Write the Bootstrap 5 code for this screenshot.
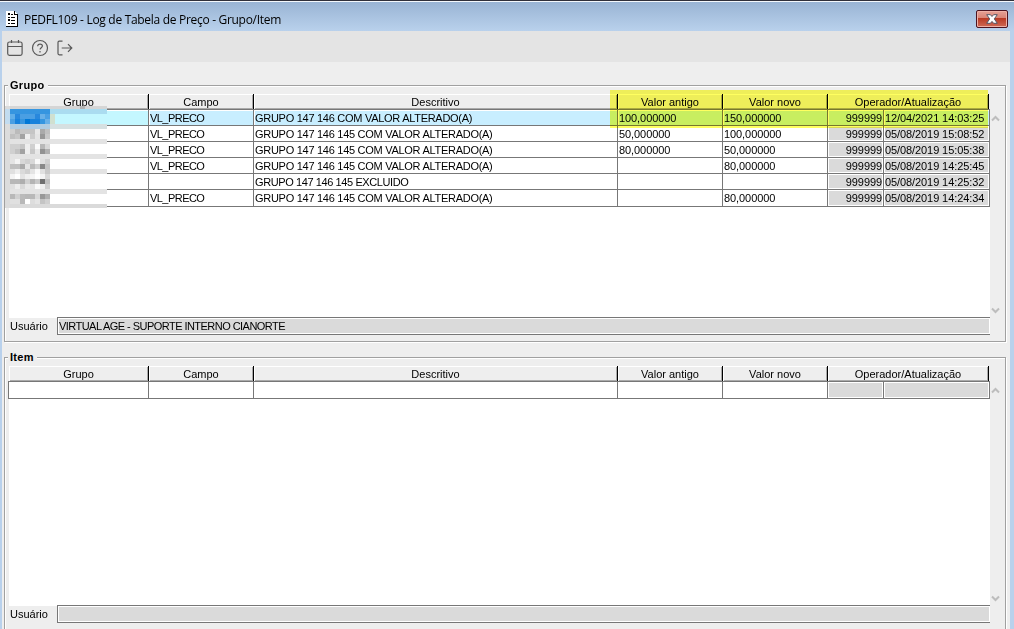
<!DOCTYPE html>
<html lang="pt-BR">
<head>
<meta charset="utf-8">
<title>PEDFL109 - Log de Tabela de Preço - Grupo/Item</title>
<link rel="stylesheet" href="https://cdn.jsdelivr.net/npm/bootstrap@5.3.0/dist/css/bootstrap.min.css">
<style>
body{width:1014px;height:629px;overflow:hidden;background:#b9d1ec;color:#000;font:11px/15px "Liberation Sans",Arial,sans-serif}
.titlebar{height:31px;border-top:1px solid #30303a;box-shadow:inset 0 1px #f4f8fc;background:linear-gradient(#98b3d3,#b9d1ec);padding:7px 6px 0 6px}
.caption{font:12px/20px "Open Sans","Noto Sans",sans-serif;letter-spacing:-.3px;white-space:pre;margin:2px 0 0 6px}
.closebtn{width:32px;height:18px;margin-top:2px;border:1px solid #4c1420;border-radius:2px;background:linear-gradient(#e5a195,#d98375 45%,#b93a24 46%,#cf6a56);box-shadow:inset 0 0 0 1px #eeb0a6}
.client{margin:0 4px 0 2px;height:598px;background:#eee}
.tools{height:31px;background:#e4e4e4;padding:8px 0 0 4px;gap:7px}
.group{margin:0 4px 0 2px;border:1px solid #a0a0a0;box-shadow:inset 1px 1px #fff,1px 1px #fff;padding:8px 0 0 3px}
.group1{margin-top:23px;height:257px}
.group2{margin-top:15px;height:290px}
.caption-tag{left:3px;top:-7px;padding:0 3px 0 2px;line-height:13px;font-weight:bold;letter-spacing:.3px;background:#eee}
.body1{height:224px}.body2{height:240px}
.sheet{width:982px;background:linear-gradient(#fff,#fff) no-repeat 1px 0}
.hd,.rw{display:grid;grid-template-columns:140px 105px 364px 105px 105px 161px}
.hd{height:15px;margin-left:1px;background:#eee}
.hd>div{text-align:center;line-height:17px;height:15px;border-right:1px solid #000;box-shadow:inset 1px 1px #fff,inset -1px -1px #aaa;overflow:hidden}
.rw{grid-template-columns:140px 105px 364px 105px 105px 56px 106px;height:16px;border-left:1px solid #777}
.rw:last-child{height:18px;border-bottom:1px solid #777}
.rw>div{border-top:1px solid #777;border-right:1px solid #777;padding-left:1px;line-height:17px;white-space:pre;overflow:hidden}
.rw>div:nth-child(n+6){background:#dadada;box-shadow:inset 1px 1px #fff,inset -1px -1px #fff}
.rw>div:nth-child(6){text-align:right;padding-right:1px}
.rw.sel>div,.rw.sel>div:nth-child(n+6){background:#c8eeff;box-shadow:inset 1px 1px #fff}
.rw.sel>div:first-child{background:#c4f7ff}
.fld{letter-spacing:-.54px}.desc{letter-spacing:-.28px}.num{letter-spacing:-.08px}.dt{letter-spacing:-.09px}
.rail{width:13px;padding:20px 0 3px 1px}
.user{height:20px}
.user label{width:49px;padding-left:2px;line-height:16px}
.userfield{width:933px;height:18px;margin-top:-1px;border:1px solid #777;border-right:0;box-shadow:inset 1px 1px #fff,inset -1px -1px #fff;background:#dadada;line-height:17px;padding-left:1px;white-space:pre;letter-spacing:-.54px}
.marker{left:605px;top:4px;width:378px;height:38px;background:#ffff60;mix-blend-mode:multiply}
.mosaic{left:0;top:20px}
</style>
<script src="https://cdn.jsdelivr.net/npm/bootstrap@5.3.0/dist/js/bootstrap.bundle.min.js"></script>
</head>
<body>
<header class="titlebar d-flex align-items-start">
  <svg width="12" height="16" viewBox="0 0 12 16" style="margin-top:3px" shape-rendering="crispEdges"><path d="M0 0h8l4 4v12H0z" fill="#fff"/><path d="M8 0h1v3h3v13H0v-1h11V4H8zM2 2h2v2H2zM5 3h2v1H5zM2 6h2v1H2zM5 6h4v1H5zM2 8h2v2H2zM5 9h4v1H5zM2 12h2v1H2zM5 12h4v1H5z"/></svg>
  <span class="caption">PEDFL109 - Log de Tabela de Preço - Grupo/Item</span>
  <div class="closebtn ms-auto d-flex justify-content-center align-items-center"><svg width="12" height="10" viewBox="0 0 12 10"><path d="M.7.700H4.400L6 2.500 7.600.700h3.700L8.300 4.900 11.300 9.300H7.600L6 7.400 4.400 9.300H.7L3.700 4.900z" fill="#fff" stroke="#535666"/></svg></div>
</header>
<main class="client">
  <nav class="tools d-flex">
    <svg width="18" height="18" viewBox="0 0 18 18" fill="none" stroke="#585858" stroke-width="1.200"><rect x="1.700" y="3" width="14.400" height="13.300" rx="1.800"/><path d="M2 7.500h14M5.500 1v3M12.500 1v3"/></svg>
    <svg width="18" height="18" viewBox="0 0 18 18" fill="none" stroke="#585858" stroke-width="1.200"><circle cx="9" cy="9" r="7.500"/><path d="M6.700 7.200c0-3 4.700-2.700 4.700-.2 0 1.700-2.300 1.600-2.300 3.400M9 12v1.400"/></svg>
    <svg width="18" height="18" viewBox="0 0 18 18" fill="none" stroke="#585858" stroke-width="1.200"><path d="M6.500 2.200H3.200Q2 2.200 2 3.400v11.200q0 1.200 1.200 1.200h3.300M5.700 9h10M12 5.200 15.800 9 12 12.800"/></svg>
  </nav>
  <section class="group group1 position-relative">
    <span class="caption-tag position-absolute">Grupo</span>
    <div class="d-flex body1">
      <div class="sheet">
        <div class="hd"><div>Grupo</div><div>Campo</div><div>Descritivo</div><div>Valor antigo</div><div>Valor novo</div><div>Operador/Atualização</div></div>
        <div>
        <div class="rw sel"><div></div><div class="fld">VL_PRECO</div><div class="desc">GRUPO 147 146 COM VALOR ALTERADO(A)</div><div class="num">100,000000</div><div class="num">150,000000</div><div class="num">999999</div><div class="dt">12/04/2021 14:03:25</div></div>
        <div class="rw"><div></div><div class="fld">VL_PRECO</div><div class="desc">GRUPO 147 146 145 COM VALOR ALTERADO(A)</div><div class="num">50,000000</div><div class="num">100,000000</div><div class="num">999999</div><div class="dt">05/08/2019 15:08:52</div></div>
        <div class="rw"><div></div><div class="fld">VL_PRECO</div><div class="desc">GRUPO 147 146 145 COM VALOR ALTERADO(A)</div><div class="num">80,000000</div><div class="num">50,000000</div><div class="num">999999</div><div class="dt">05/08/2019 15:05:38</div></div>
        <div class="rw"><div></div><div class="fld">VL_PRECO</div><div class="desc">GRUPO 147 146 145 COM VALOR ALTERADO(A)</div><div></div><div class="num">80,000000</div><div class="num">999999</div><div class="dt">05/08/2019 14:25:45</div></div>
        <div class="rw"><div></div><div></div><div class="desc" style="letter-spacing:-.4px">GRUPO 147 146 145 EXCLUIDO</div><div></div><div></div><div class="num">999999</div><div class="dt">05/08/2019 14:25:32</div></div>
        <div class="rw"><div></div><div class="fld">VL_PRECO</div><div class="desc">GRUPO 147 146 145 COM VALOR ALTERADO(A)</div><div></div><div class="num">80,000000</div><div class="num">999999</div><div class="dt">05/08/2019 14:24:34</div></div>
        </div>
      </div>
      <div class="rail d-flex flex-column justify-content-between"><svg width="9" height="8" fill="none" stroke="#bdbdbd" stroke-width="2"><path d="M1 6.500 4.500 3 8 6.500"/></svg><svg width="9" height="8" fill="none" stroke="#bdbdbd" stroke-width="2"><path d="M1 1.500 4.500 5 8 1.500"/></svg></div>
    </div>
    <div class="user d-flex"><label>Usuário</label><div class="userfield">VIRTUAL AGE - SUPORTE INTERNO CIANORTE</div></div>
    <svg class="mosaic position-absolute" width="102" height="102" shape-rendering="crispEdges" id="mosaic"></svg>
    <div class="marker position-absolute"></div>
  </section>
  <section class="group group2 position-relative">
    <span class="caption-tag position-absolute">Item</span>
    <div class="d-flex body2">
      <div class="sheet">
        <div class="hd"><div>Grupo</div><div>Campo</div><div>Descritivo</div><div>Valor antigo</div><div>Valor novo</div><div>Operador/Atualização</div></div>
        <div><div class="rw"><div></div><div></div><div></div><div></div><div></div><div></div><div></div></div></div>
      </div>
      <div class="rail d-flex flex-column justify-content-between"><svg width="9" height="8" fill="none" stroke="#bdbdbd" stroke-width="2"><path d="M1 6.500 4.500 3 8 6.500"/></svg><svg width="9" height="8" fill="none" stroke="#bdbdbd" stroke-width="2"><path d="M1 1.500 4.500 5 8 1.500"/></svg></div>
    </div>
    <div class="user d-flex"><label>Usuário</label><div class="userfield"></div></div>
  </section>
</main>
<script>
// Pixelated mask over the group codes: [y, height, strip colour, cell colours]
const rows = [
 [0,3,'#d5d5d5'],
 [3,5,'#aadcf0','3595e0 3595e0 3595e0 3595e0 3595e0 3595e0 3595e0 3595e0'],
 [8,5,'','60aee8 2888dd 4a9fe3 4a9fe3 4a9fe3 2888dd 68b0e8 4a9fe3'],
 [13,5,'','4a9fe3 1882dc 3595e0 0078d7 1882dc 1882dc 3595e0 68b0e8'],
 [18,5,'#d6e0e1','b0cce2 b0cce2 b0cce2 b0cce2 b0cce2 b0cce2 b0cce2 b0cce2'],
 [23,5,'','d0d0d0 bbbbbb c5c5c5 c5c5c5 c5c5c5 e8e8e8 aaaaaa c0c0c0'],
 [28,5,'','c0c0c0 c8c8c8 a2a2a2 eeeeee cccccc e4e4e4 989898 c8c8c8'],
 [33,5,'#e3e3e3'],
 [38,5,'','d0d0d0 d0d0d0 c5c5c5 eeeeee d0d0d0 fafafa b8b8b8 d8d8d8'],
 [43,5,'','d0d0d0 c2c2c2 a2a2a2 eeeeee c8c8c8 e8e8e8 929292 b0b0b0'],
 [48,5,'#e3e3e3'],
 [53,5,'','e4e4e4 f4f4f4 d8d8d8 d0d0d0 d8d8d8 fafafa e0e0e0 d0d0d0'],
 [58,5,'','c0c0c0 c0c0c0 aaaaaa e4e4e4 bbbbbb d0d0d0 888888 c4c4c4'],
 [63,5,'#e3e3e3','e0e0e0 eeeeee dadada d0d0d0 e4e4e4 fafafa e0e0e0 c8c8c8'],
 [68,5,'','f4f4f4 ffffff e4e4e4 f0f0f0 f4f4f4 ffffff f4f4f4 d8d8d8'],
 [73,5,'','b8b8b8 b8b8b8 aeaeae d0d0d0 b4b4b4 c8c8c8 707070 c0c0c0'],
 [78,5,'','e0e0e0 eeeeee d8d8d8 e8e8e8 e4e4e4 fafafa f0f0f0 d0d0d0'],
 [83,5,'#e3e3e3'],
 [88,5,'','b8b8b8 d0d0d0 bbbbbb b8b8b8 b8b8b8 d8d8d8 999999 b0b0b0'],
 [93,5,'','e0e0e0 e0e0e0 b8b8b8 ffffff dddddd e4e4e4 c4c4c4 d0d0d0'],
 [98,4,'#dadada']];
let out = '<rect x="45" y="3" width="57" height="99" fill="#fff"/><rect x="45" y="3" width="57" height="15" fill="#c4f7ff"/>';
for (const [y,h,strip,cells] of rows) {
  if (strip) out += `<rect x="0" y="${y}" width="102" height="${h}" fill="${strip}"/>`;
  out += `<rect x="0" y="${y}" width="5" height="${h}" fill="${y>2&&y<18?'#c2dcf0':'#dcdcdc'}"/>`;
  if (cells) cells.split(' ').forEach((c,i)=>{ out += `<rect x="${5+i*5}" y="${y}" width="5" height="${h}" fill="#${c}"/>`; });
}
out += '<rect x="45" y="8" width="5" height="10" fill="#d0e0d0"/><rect x="75" y="0" width="5" height="3" fill="#b4b4b4"/>';
document.getElementById('mosaic').innerHTML = out;
</script>
</body>
</html>
